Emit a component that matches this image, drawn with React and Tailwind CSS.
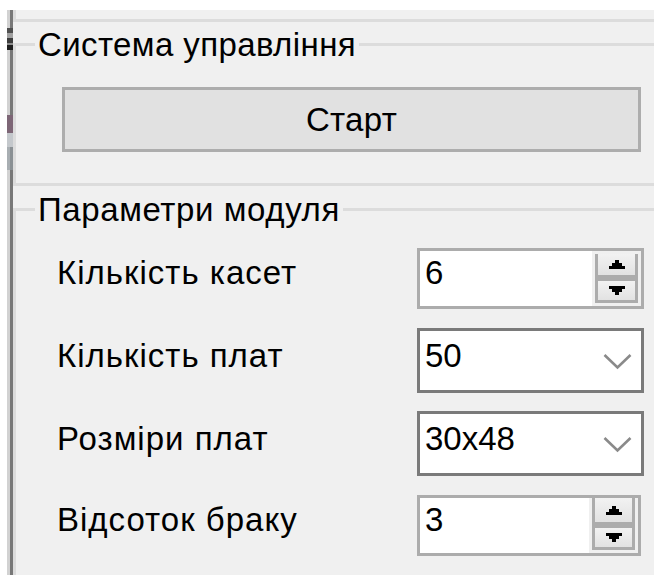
import React from "react";

// Stepped arrow glyph for the numeric spinner buttons
function Arrow({ up }) {
  return (
    <svg width="16" height="9" viewBox="0 0 16 9" shapeRendering="crispEdges">
      {up ? (
        <g fill="#000">
          <rect x="6" y="0" width="4" height="3" />
          <rect x="3" y="3" width="10" height="3" />
          <rect x="0" y="6" width="16" height="3" />
        </g>
      ) : (
        <g fill="#000">
          <rect x="0" y="0" width="16" height="3" />
          <rect x="3" y="3" width="10" height="3" />
          <rect x="6" y="6" width="4" height="3" />
        </g>
      )}
    </svg>
  );
}

function NumericBox({ value, width, padTop, upH }) {
  return (
    <div className={`flex h-[61px] ${width} border-[3px] border-[#acacac] bg-white`}>
      <span className="flex-1 pl-[5px] pt-[5px]">{value}</span>
      <div className={`flex w-[49px] flex-col bg-[#f0f0f0] px-[3px] pb-[3px] ${padTop}`}>
        <div className="flex flex-1 flex-col border-x-[3px] border-b-[3px] border-[#acacac]">
          <div className={`${upH} flex items-center justify-center bg-linear-to-b from-[#f2f2f2] to-[#e2e2e2]`}>
            <Arrow up />
          </div>
          <div className="h-[6px] bg-[#acacac]" />
          <div className="flex flex-1 items-center justify-center bg-linear-to-b from-[#f2f2f2] to-[#e2e2e2]">
            <Arrow />
          </div>
        </div>
      </div>
    </div>
  );
}

function Combo({ value }) {
  return (
    <div className="flex h-[65px] w-[227px] items-start border-[3px] border-[#7a7a7a] bg-white">
      <span className="flex-1 pl-[5px] pt-[8px]">{value}</span>
      <svg width="29" height="17" viewBox="0 0 29 17" className="mr-[9px] mt-[22px]">
        <polyline
          points="1.5,2 14.5,14.5 27.5,2"
          fill="none"
          stroke="#8a8a8a"
          strokeWidth="2.6"
        />
      </svg>
    </div>
  );
}

function Row({ label, mt, labelMt, children }) {
  return (
    <div className={`flex ${mt}`}>
      <div className={`ml-[41px] w-[360px] tracking-[1px] ${labelMt}`}>{label}</div>
      {children}
    </div>
  );
}

// Thin splitter edge on the left with a few bits of the neighbouring pane showing
function LeftEdge() {
  return (
    <div className="flex w-[6px] flex-col bg-[linear-gradient(to_right,#d2d2d2_50%,#787878_50%)]">
      <div className="h-[18px]" />
      <div className="h-[5px] bg-[#505050]" />
      <div className="h-[5px] bg-[#a0a0a0]" />
      <div className="h-[5px] bg-[#3c3c3c]" />
      <div className="h-[2px] bg-[#8c8c8c]" />
      <div className="h-[5px] bg-[#1e1e1e]" />
      <div className="h-[65px]" />
      <div className="h-[18px] bg-[#7d6676]" />
      <div className="h-[14px] bg-[#c4c8cc]" />
      <div className="h-[23px] bg-[linear-gradient(to_right,#a8aeb2_50%,#8a9094_50%)]" />
    </div>
  );
}

export default function App() {
  return (
    <div className="h-[575px] w-[654px] overflow-hidden bg-white font-['Liberation_Sans',Arial,sans-serif] text-[33px] leading-[33px] text-black">
      <div className="h-[10px]" />
      <div className="flex h-[565px]">
        <div className="w-[7px]" />
        <LeftEdge />
        <div className="flex-1 overflow-hidden bg-[#f0f0f0]">
          <div className="h-[12px] w-[700px] border-b-[3px] border-l-[3px] border-[#dcdcdc]" />

          <fieldset className="mt-[6px] w-[700px] border-[3px] border-r-0 border-[#dcdcdc] pb-[31px]">
            <legend className="ml-[19px] px-[3px] leading-[33px] tracking-[0.4px]">Система управління</legend>
            <button className="ml-[46px] mt-[26px] flex h-[65px] w-[579px] items-center justify-center border-[3px] border-[#adadad] bg-[#e1e1e1] leading-[33px] tracking-[0.3px]">
              Старт
            </button>
          </fieldset>

          <fieldset className="mt-[7px] w-[700px] border-[3px] border-r-0 border-[#dcdcdc] pb-[40px]">
            <legend className="ml-[19px] px-[3px] leading-[33px] tracking-[0.6px]">Параметри модуля</legend>
            <Row label="Кількість касет" mt="mt-[22px]" labelMt="mt-[8px]">
              <NumericBox value="6" width="w-[227px]" padTop="pt-[3px]" upH="h-[21px]" />
            </Row>
            <Row label="Кількість плат" mt="mt-[19px]" labelMt="mt-[11px]">
              <Combo value="50" />
            </Row>
            <Row label="Розміри плат" mt="mt-[18px]" labelMt="mt-[11px]">
              <Combo value="30x48" />
            </Row>
            <Row label="Відсоток браку" mt="mt-[19px]" labelMt="mt-[8px]">
              <NumericBox value="3" width="w-[224px]" padTop="pt-0" upH="h-[24px]" />
            </Row>
          </fieldset>
        </div>
      </div>
    </div>
  );
}
